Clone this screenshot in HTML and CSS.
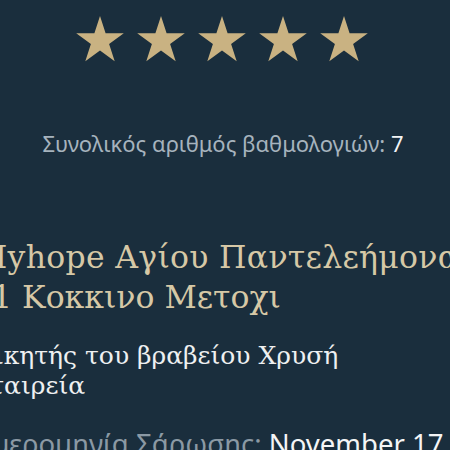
FILE: index.html
```html
<!DOCTYPE html>
<html lang="el">
<head>
<meta charset="utf-8">
<link rel="stylesheet" href="styles.css">
</head>
<body>
<main class="page">
  <div class="stars">
    <svg class="star" viewBox="0 0 48 46"><polygon points="24,0 29.6,17.3 47.8,17.3 33.1,28 38.7,45.3 24,34.6 9.3,45.3 14.9,28 0.2,17.3 18.4,17.3"/></svg>
    <svg class="star" viewBox="0 0 48 46"><polygon points="24,0 29.6,17.3 47.8,17.3 33.1,28 38.7,45.3 24,34.6 9.3,45.3 14.9,28 0.2,17.3 18.4,17.3"/></svg>
    <svg class="star" viewBox="0 0 48 46"><polygon points="24,0 29.6,17.3 47.8,17.3 33.1,28 38.7,45.3 24,34.6 9.3,45.3 14.9,28 0.2,17.3 18.4,17.3"/></svg>
    <svg class="star" viewBox="0 0 48 46"><polygon points="24,0 29.6,17.3 47.8,17.3 33.1,28 38.7,45.3 24,34.6 9.3,45.3 14.9,28 0.2,17.3 18.4,17.3"/></svg>
    <svg class="star" viewBox="0 0 48 46"><polygon points="24,0 29.6,17.3 47.8,17.3 33.1,28 38.7,45.3 24,34.6 9.3,45.3 14.9,28 0.2,17.3 18.4,17.3"/></svg>
  </div>
  <p class="count">Συνολικός αριθμός βαθμολογιών: <span class="num">7</span></p>
  <div class="details">
    <h1 class="title"><span class="line1">Myhope Αγίου Παντελεήμονα</span><br>41 Κοκκινο Μετοχι</h1>
    <p class="award">Νικητής του βραβείου Χρυσή<br>Εταιρεία</p>
    <p class="date">Ημερομηνία Σάρωσης: <span class="val">November 17</span></p>
  </div>
</main>
</body>
</html>
```

FILE: styles.css
```css
html, body {
  margin: 0;
  padding: 0;
  background: #1a2e3d;
  overflow: hidden;
}
.page {
  width: 450px;
  height: 450px;
  overflow: hidden;
  display: flex;
  flex-direction: column;
}
.stars {
  display: flex;
  justify-content: center;
  gap: 13px;
  padding-top: 16px;
  padding-right: 6px;
}
.star {
  width: 48px;
  height: 46px;
  fill: #c9b282;
}
.count {
  margin: 66px 0 0;
  text-align: center;
  font-family: "Noto Sans", sans-serif;
  font-size: 22px;
  color: #a6b3bd;
  padding-right: 4px;
}
.num {
  color: #f2f4f5;
}
.details {
  margin-left: -28px;
  white-space: nowrap;
}
.title {
  margin: 79px 0 0;
  font-family: "DejaVu Serif", serif;
  font-weight: normal;
  font-size: 31.5px;
  line-height: 40px;
  color: #d6c8a6;
}
.line1 {
  letter-spacing: 0.3px;
  margin-left: 3px;
}
.award {
  margin: 24px 0 0;
  font-family: "DejaVu Serif", serif;
  font-size: 25px;
  line-height: 30px;
  color: #eef0f1;
}
.date {
  margin: 24px 0 0;
  font-family: "Noto Sans", sans-serif;
  font-size: 27.5px;
  color: #8b99a4;
}
.val {
  color: #f4f5f6;
}
```
